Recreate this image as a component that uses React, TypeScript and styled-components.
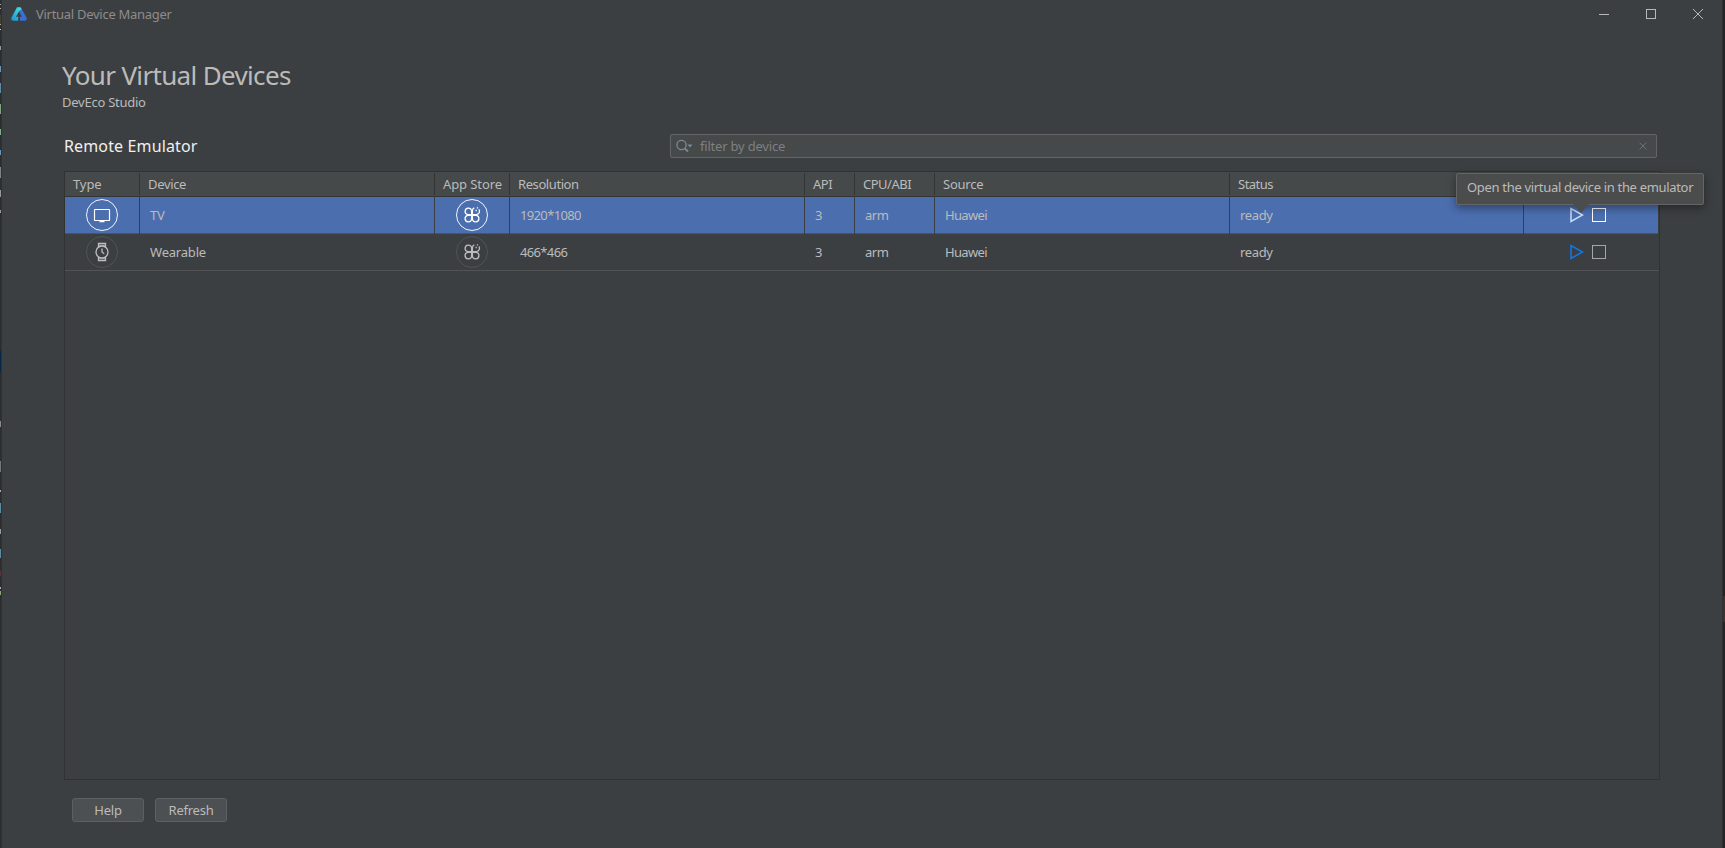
import React from "react";
import styled, { createGlobalStyle } from "styled-components";

const GlobalStyle = createGlobalStyle`
  * { box-sizing: border-box; }
  body { margin: 0; background: #2b2b2b; }
`;

const Screen = styled.div`
  display: flex;
  width: 1725px;
  height: 848px;
  overflow: hidden;
  background: #2b2b2b;
  font-family: "Noto Sans", "Open Sans", sans-serif;
  font-size: 13px;
  color: #bbbbbb;
`;

const EditorSliver = styled.div`
  position: relative;
  flex: 0 0 2px;
  background: #2b2d2f;
  border-right: 1px solid #2f3133;
`;

const Mark = styled.i<{ $y: number; $h: number; $c: string }>`
  position: absolute;
  left: 0;
  width: 1px;
  top: ${(p) => p.$y}px;
  height: ${(p) => p.$h}px;
  background: ${(p) => p.$c};
`;

const RightSliver = styled.div`
  flex: 0 0 3px;
  background: #242424;
  border-left: 1px solid #2f3132;
  padding-top: 596px;
`;

const ScrollMark = styled.div`
  height: 26px;
  background: #373331;
`;

const Window = styled.main`
  flex: 1;
  display: flex;
  flex-direction: column;
  background: #3c3f41;
`;

const Label = styled.span<{ $ls?: number }>`
  display: inline-block;
  white-space: pre;
  letter-spacing: ${(p) => p.$ls ?? 0}px;
`;

const TitleBar = styled.header`
  display: flex;
  align-items: center;
  height: 28px;
  padding: 0 19px 0 9px;
  color: #8c8c8c;
`;

const TitleText = styled(Label)`
  margin-left: 9px;
  flex: 1;
`;

const WindowControls = styled.div`
  display: flex;
  gap: 37px;
`;

const Heading = styled.h1`
  margin: 29px 0 0 60px;
  height: 36px;
  line-height: 36px;
  font-size: 26px;
  font-weight: 400;
`;

const SubHeading = styled.div`
  margin-left: 60px;
  height: 18px;
  line-height: 18px;
`;

const FilterRow = styled.div`
  display: flex;
  align-items: center;
  margin-top: 23px;
  padding: 0 65px 0 62px;
  height: 24px;
`;

const SectionTitle = styled.h2`
  margin: 0;
  width: 606px;
  font-size: 16px;
  font-weight: 400;
  line-height: 24px;
  color: #f0f0f0;
`;

const SearchField = styled.div`
  flex: 1;
  display: flex;
  align-items: center;
  height: 24px;
  padding: 0 8px 0 5px;
  border: 1px solid #646464;
  border-radius: 2px;
  background: #45494a;
  color: #7f8081;
`;

const Placeholder = styled(Label)`
  flex: 1;
  margin: 0 0 1px 7px;
`;

const Table = styled.section`
  margin: 13px 0 0 62px;
  width: 1596px;
  height: 609px;
  border: 1px solid #323232;
`;

const columns = "75px 295px 75px 295px 50px 80px 295px 294px 135px";

const HeaderRow = styled.div`
  display: grid;
  grid-template-columns: ${columns};
  height: 25px;
  padding-top: 1px;
  border-bottom: 1px solid #323435;
  background: #45494a;
`;

const HeaderCell = styled.div`
  height: 22px;
  padding-left: 8px;
  border-right: 1px solid #323435;
  line-height: 23px;
`;

const Row = styled.div<{ $selected?: boolean }>`
  display: grid;
  grid-template-columns: ${columns};
  height: 37px;
  border-bottom: 1px solid #515355;
  background: ${(p) => (p.$selected ? "#4b6eaf" : "transparent")};
`;

const Cell = styled.div<{ $selected?: boolean }>`
  padding-left: 10px;
  border-right: 1px solid ${(p) => (p.$selected ? "#3c3f41" : "transparent")};
  line-height: 37px;
`;

const IconCell = styled(Cell)`
  display: flex;
  justify-content: center;
  padding: 2px 0 0;
`;

const ActionCell = styled(Cell)`
  position: relative;
  display: flex;
  gap: 8px;
  padding: 10px 0 0 46px;
`;

const Tooltip = styled.div`
  position: absolute;
  z-index: 2;
  left: -68px;
  top: -24px;
  width: 248px;
  height: 32px;
  padding-left: 10px;
  border: 1px solid #636569;
  border-radius: 2px;
  background: #4b4d4d;
  box-shadow: 0 3px 8px rgba(0, 0, 0, 0.4);
  line-height: 27px;
`;

const TooltipArrow = styled.svg`
  position: absolute;
  left: 116px;
  top: 30px;
`;

const ButtonBar = styled.footer`
  display: flex;
  gap: 11px;
  margin: 18px 0 0 70px;
`;

const Button = styled.button`
  width: 72px;
  height: 24px;
  padding: 0;
  border: 1px solid #5e6060;
  border-radius: 3px;
  background: #4c5052;
  color: #bbbbbb;
  font: inherit;
  line-height: 22px;
`;

const Logo = () => (
  <svg width="16" height="16" viewBox="0 0 16 16">
    <defs>
      <linearGradient id="edgeLeft" x1="0" y1="1" x2="0.7" y2="0">
        <stop offset="0" stopColor="#1c8fd0" />
        <stop offset="1" stopColor="#3fdce0" />
      </linearGradient>
      <linearGradient id="edgeRight" x1="0" y1="0" x2="0.6" y2="1">
        <stop offset="0" stopColor="#2d7fd6" />
        <stop offset="1" stopColor="#3f69d8" />
      </linearGradient>
    </defs>
    <path d="M6 1.2h3.6L11 3.8 8.2 5 5 10.8h2.2V14.8H2.2Q-.4 14.4.4 11.8z" fill="url(#edgeLeft)" />
    <path d="M9.6 1.2 15.7 11.8q.6 2.6-2.2 3H9v-4h2L8 5.2l2.4-1.4z" fill="url(#edgeRight)" />
  </svg>
);

const TypeIcon = ({ kind, selected }: { kind: "tv" | "watch" | "store"; selected?: boolean }) => (
  <svg width="32" height="32" viewBox="0 0 32 32" fill="none" stroke={selected ? "#fff" : "#bcbdbe"}>
    <circle cx="16" cy="16" r="15.5" stroke={selected ? "#f2f5fa" : "#515456"} />
    {kind === "tv" && (
      <g>
        <rect x="8.5" y="10.5" width="15" height="11" rx="0.6" strokeWidth="1.2" />
        <path d="M16 21.5v1.3M13.5 22.6h5" strokeWidth="1.2" />
      </g>
    )}
    {kind === "watch" && (
      <g strokeWidth="1.3">
        <circle cx="16" cy="16" r="6" />
        <path d="M12.5 11V7.5h7V11M12.5 21v3.5h7V21M16 12.5V16l2.2 1.8" />
        <path d="M13 9.3h6M13 22.7h6" strokeWidth="0.8" />
      </g>
    )}
    {kind === "store" && (
      <g strokeWidth="1.3">
        <path d="M15.6 15.6h-4a3.3 3.3 0 1 1 4-4z" />
        <path d="M15.6 16.4v4a3.3 3.3 0 1 1-4-4z" />
        <path d="M16.4 16.4h4a3.3 3.3 0 1 1-4 4z" />
        <path d="M18.3 8.9a3.3 3.3 0 0 0-1.9 2.7v4h4a3.3 3.3 0 0 0 2.5-5.2" />
        <path d="M20.8 8.9h1.3M19.5 11.5h1.3" />
      </g>
    )}
  </svg>
);

const Play = ({ color }: { color: string }) => (
  <svg width="14" height="16" viewBox="0 0 14 16">
    <path d="M1 1.5v13L12.5 8z" fill="none" stroke={color} strokeWidth="1.5" />
  </svg>
);

const Stop = ({ color }: { color: string }) => (
  <svg width="14" height="16" viewBox="0 0 14 16">
    <rect x="0.5" y="1.5" width="13" height="13" fill="none" stroke={color} />
  </svg>
);

const headers: [string, number][] = [
  ["Type", -0.1], ["Device", -0.33], ["App Store", -0.1], ["Resolution", -0.42], ["API", -0.5],
  ["CPU/ABI", -0.5], ["Source", -0.25], ["Status", -0.5], ["", 0],
];

const devices = [
  { name: "TV", kind: "tv" as const, resolution: "1920*1080", selected: true },
  { name: "Wearable", kind: "watch" as const, resolution: "466*466", selected: false },
];

const editorMarks: [number, number, string][] = [
  [4, 1, "#aaa"], [8, 1, "#aaa"], [15, 9, "#45432f"], [24, 1, "#aaa"], [29, 1, "#ccc"],
  [46, 4, "#8a9aa8"], [66, 6, "#6897bb"], [83, 10, "#5f8ca5"], [104, 10, "#7fa57c"],
  [129, 6, "#7fb08c"], [150, 5, "#6897bb"], [167, 11, "#7b8790"], [190, 7, "#999"],
  [210, 3, "#999"], [351, 21, "#062844"], [421, 6, "#8c8c8c"], [461, 11, "#6f7a82"],
  [490, 2, "#aaa"], [503, 10, "#5f8ca5"], [529, 5, "#8aa0b0"], [549, 9, "#5f8ca5"],
  [571, 5, "#632f38"], [587, 2, "#aaa"], [591, 4, "#8aa870"],
];

export default function App() {
  return (
    <Screen>
      <GlobalStyle />
      <EditorSliver>
        {editorMarks.map(([y, h, c]) => <Mark key={y} $y={y} $h={h} $c={c} />)}
      </EditorSliver>
      <Window>
        <TitleBar>
          <Logo />
          <TitleText $ls={-0.28}>Virtual Device Manager</TitleText>
          <WindowControls>
            <svg width="10" height="10"><path d="M0 5.5h10" stroke="#b8b8b8" /></svg>
            <svg width="10" height="10"><rect x=".5" y=".5" width="9" height="9" fill="none" stroke="#b8b8b8" /></svg>
            <svg width="10" height="10"><path d="M0 0l10 10M10 0L0 10" stroke="#b8b8b8" /></svg>
          </WindowControls>
        </TitleBar>
        <Heading><Label $ls={-0.66}>Your Virtual Devices</Label></Heading>
        <SubHeading><Label $ls={-0.25}>DevEco Studio</Label></SubHeading>
        <FilterRow>
          <SectionTitle><Label $ls={0.14}>Remote Emulator</Label></SectionTitle>
          <SearchField>
            <svg width="17" height="14" viewBox="0 0 17 14" fill="none" stroke="#7f8b91" strokeWidth="1.3">
              <circle cx="5.5" cy="6" r="4.6" />
              <path d="M8.8 9.3 12 12.5" strokeWidth="1.8" />
              <path d="M11.5 5.5h5L14 8.4z" fill="#7f8b91" stroke="none" />
            </svg>
            <Placeholder $ls={-0.2}>filter by device</Placeholder>
            <svg width="10" height="10"><path d="M1.5 1.5l7 7M8.5 1.5l-7 7" stroke="#66737a" /></svg>
          </SearchField>
        </FilterRow>
        <Table>
          <HeaderRow>
            {headers.map(([text, ls]) => <HeaderCell key={text}><Label $ls={ls}>{text}</Label></HeaderCell>)}
          </HeaderRow>
          {devices.map(({ name, kind, resolution, selected }) => (
            <Row key={name} $selected={selected}>
              <IconCell $selected={selected}><TypeIcon kind={kind} selected={selected} /></IconCell>
              <Cell $selected={selected}><Label $ls={-0.2}>{name}</Label></Cell>
              <IconCell $selected={selected}><TypeIcon kind="store" selected={selected} /></IconCell>
              <Cell $selected={selected}><Label $ls={-0.65}>{resolution}</Label></Cell>
              <Cell $selected={selected}><Label>3</Label></Cell>
              <Cell $selected={selected}><Label $ls={-0.5}>arm</Label></Cell>
              <Cell $selected={selected}><Label $ls={-0.65}>Huawei</Label></Cell>
              <Cell $selected={selected}><Label $ls={-0.35}>ready</Label></Cell>
              <ActionCell $selected={selected}>
                <Play color={selected ? "#c5dcfa" : "#0f78ee"} />
                <Stop color={selected ? "#fff" : "#a5a6a7"} />
                {selected && (
                  <Tooltip>
                    <Label $ls={-0.32}>Open the virtual device in the emulator</Label>
                    <TooltipArrow width="16" height="9"><path d="M0 0h16L8 9z" fill="#4b4d4d" /></TooltipArrow>
                  </Tooltip>
                )}
              </ActionCell>
            </Row>
          ))}
        </Table>
        <ButtonBar>
          <Button><Label $ls={-0.2}>Help</Label></Button>
          <Button><Label $ls={-0.25}>Refresh</Label></Button>
        </ButtonBar>
      </Window>
      <RightSliver><ScrollMark /></RightSliver>
    </Screen>
  );
}
